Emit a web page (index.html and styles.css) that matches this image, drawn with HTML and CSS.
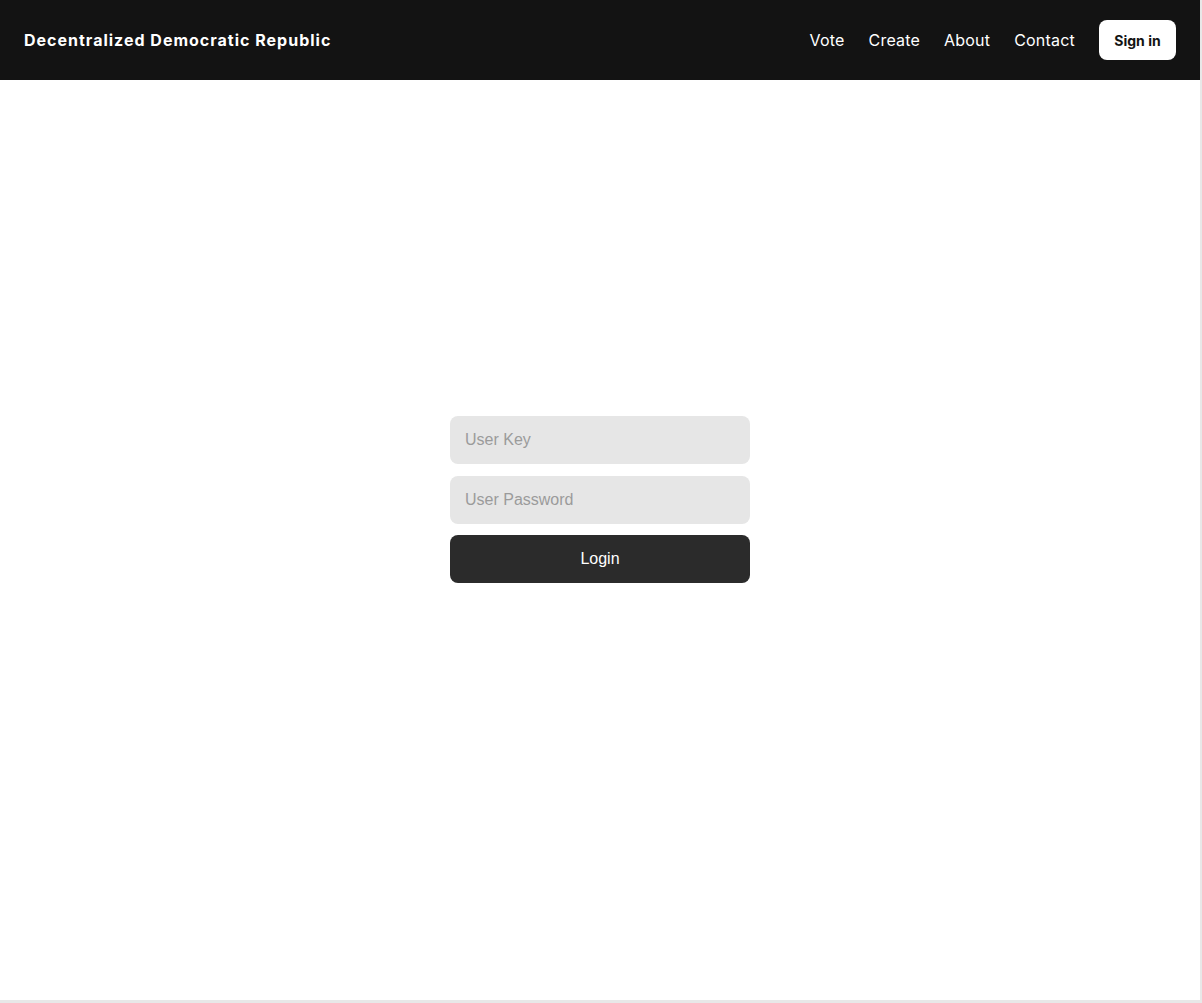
FILE: index.html
```html
<!DOCTYPE html>
<html>
<head>
<meta charset="utf-8">
<link rel="stylesheet" href="styles.css">
</head>
<body>
<div class="app">
  <header class="header">
    <div class="brand">Decentralized Democratic Republic</div>
    <nav class="nav">
      <a class="nav-link" href="#">Vote</a>
      <a class="nav-link" href="#">Create</a>
      <a class="nav-link" href="#">About</a>
      <a class="nav-link" href="#">Contact</a>
      <button class="signin">Sign in</button>
    </nav>
  </header>
  <main class="main">
    <form class="login-form">
      <input class="field" type="text" placeholder="User Key">
      <input class="field" type="password" placeholder="User Password">
      <button class="login-btn" type="button">Login</button>
    </form>
  </main>
</div>
</body>
</html>
```

FILE: styles.css
```css
html, body {
  margin: 0;
  padding: 0;
}
body {
  background: #e8e8e8;
  width: 1202px;
  height: 1003px;
  overflow: hidden;
}
.app {
  width: 1200px;
  height: 1000px;
  background: #ffffff;
  display: flex;
  flex-direction: column;
}
.header {
  height: 80px;
  background: #131313;
  display: flex;
  align-items: center;
  justify-content: space-between;
  padding: 0 24px;
  box-sizing: border-box;
  flex-shrink: 0;
}
.brand {
  font-family: Inter, sans-serif;
  font-weight: 700;
  font-size: 16px;
  letter-spacing: 1px;
  color: #ffffff;
}
.nav {
  display: flex;
  align-items: center;
  gap: 24px;
}
.nav-link {
  font-family: Inter, sans-serif;
  font-size: 16px;
  letter-spacing: 0.2px;
  color: #ffffff;
  text-decoration: none;
}
.signin {
  font-family: Inter, sans-serif;
  font-weight: 700;
  font-size: 14px;
  color: #131313;
  background: #ffffff;
  border: none;
  border-radius: 8px;
  height: 40px;
  padding: 0 15px;
  width: 77px;
}
.main {
  flex: 1;
  display: flex;
  align-items: center;
  justify-content: center;
  padding-bottom: 82px;
}
.login-form {
  width: 300px;
  display: flex;
  flex-direction: column;
  gap: 12px;
}
.field {
  height: 48px;
  box-sizing: border-box;
  border: none;
  border-radius: 8px;
  background: #e6e6e6;
  padding: 0 15px;
  font-family: "Liberation Sans", Arial, sans-serif;
  font-size: 16px;
  color: #222;
  outline: none;
  margin: 0;
}
.field::placeholder {
  color: #9b9b9b;
}
.login-btn {
  height: 48px;
  margin-top: -1px;
  border: none;
  border-radius: 8px;
  background: #2b2b2b;
  color: #ffffff;
  font-family: "Liberation Sans", Arial, sans-serif;
  font-size: 16px;
}
```
